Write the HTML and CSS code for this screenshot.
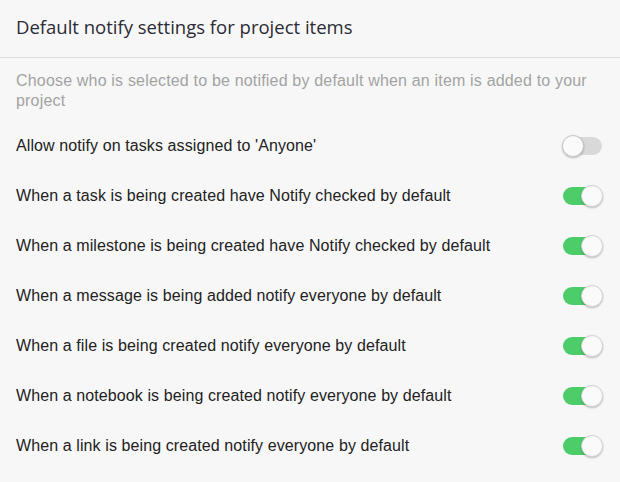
FILE: index.html
```html
<!DOCTYPE html>
<html>
<head>
<meta charset="utf-8">
<link rel="stylesheet" href="styles.css">
</head>
<body>
<div class="panel">
  <div class="header"><h1 class="title">Default notify settings for project items</h1></div>
  <div class="content">
    <p class="desc">Choose who is selected to be notified by default when an item is added to your project</p>
    <ul class="rows">
      <li class="row"><span class="label">Allow notify on tasks assigned to 'Anyone'</span><span class="switch"></span></li>
      <li class="row"><span class="label">When a task is being created have Notify checked by default</span><span class="switch on"></span></li>
      <li class="row"><span class="label">When a milestone is being created have Notify checked by default</span><span class="switch on"></span></li>
      <li class="row"><span class="label">When a message is being added notify everyone by default</span><span class="switch on"></span></li>
      <li class="row"><span class="label">When a file is being created notify everyone by default</span><span class="switch on"></span></li>
      <li class="row"><span class="label">When a notebook is being created notify everyone by default</span><span class="switch on"></span></li>
      <li class="row"><span class="label">When a link is being created notify everyone by default</span><span class="switch on"></span></li>
    </ul>
  </div>
</div>
</body>
</html>
```
FILE: styles.css
```css
html, body {
  margin: 0;
  padding: 0;
  background: #f7f7f7;
}
.panel {
  width: 620px;
  height: 482px;
  background: #f7f7f7;
  font-family: "Liberation Sans", Arial, sans-serif;
}
.header {
  height: 58px;
  border-bottom: 1px solid #dcdcdc;
  display: flex;
  align-items: center;
  padding: 0 16px;
  box-sizing: border-box;
}
.title {
  margin: 0;
  font-family: "Open Sans", sans-serif;
  font-weight: 400;
  font-size: 18.5px;
  color: #2b2b35;
  padding-bottom: 4px;
}
.content {
  padding: 13px 18px 0 16px;
}
.desc {
  margin: 0;
  font-size: 16px;
  line-height: 20px;
  letter-spacing: 0.18px;
  color: #a3a3a3;
}
.rows {
  list-style: none;
  margin: 10px 0 0;
  padding: 0;
}
.row {
  height: 50px;
  display: flex;
  align-items: center;
  justify-content: space-between;
}
.label {
  font-size: 16px;
  letter-spacing: 0.1px;
  color: #222;
}
.switch {
  position: relative;
  width: 39px;
  height: 18px;
  border-radius: 9px;
  background: #d9d9d9;
  flex: none;
}
.switch::after {
  content: "";
  position: absolute;
  top: -2px;
  left: -1px;
  width: 20px;
  height: 20px;
  border-radius: 50%;
  background: #fafafa;
  border: 1px solid #c8c8c8;
  box-shadow: 0 1px 2px rgba(0,0,0,0.25);
}
.switch.on {
  background: #4ccd6a;
}
.switch.on::after {
  left: auto;
  right: -1px;
  border-color: #d6d6d6;
}
```
